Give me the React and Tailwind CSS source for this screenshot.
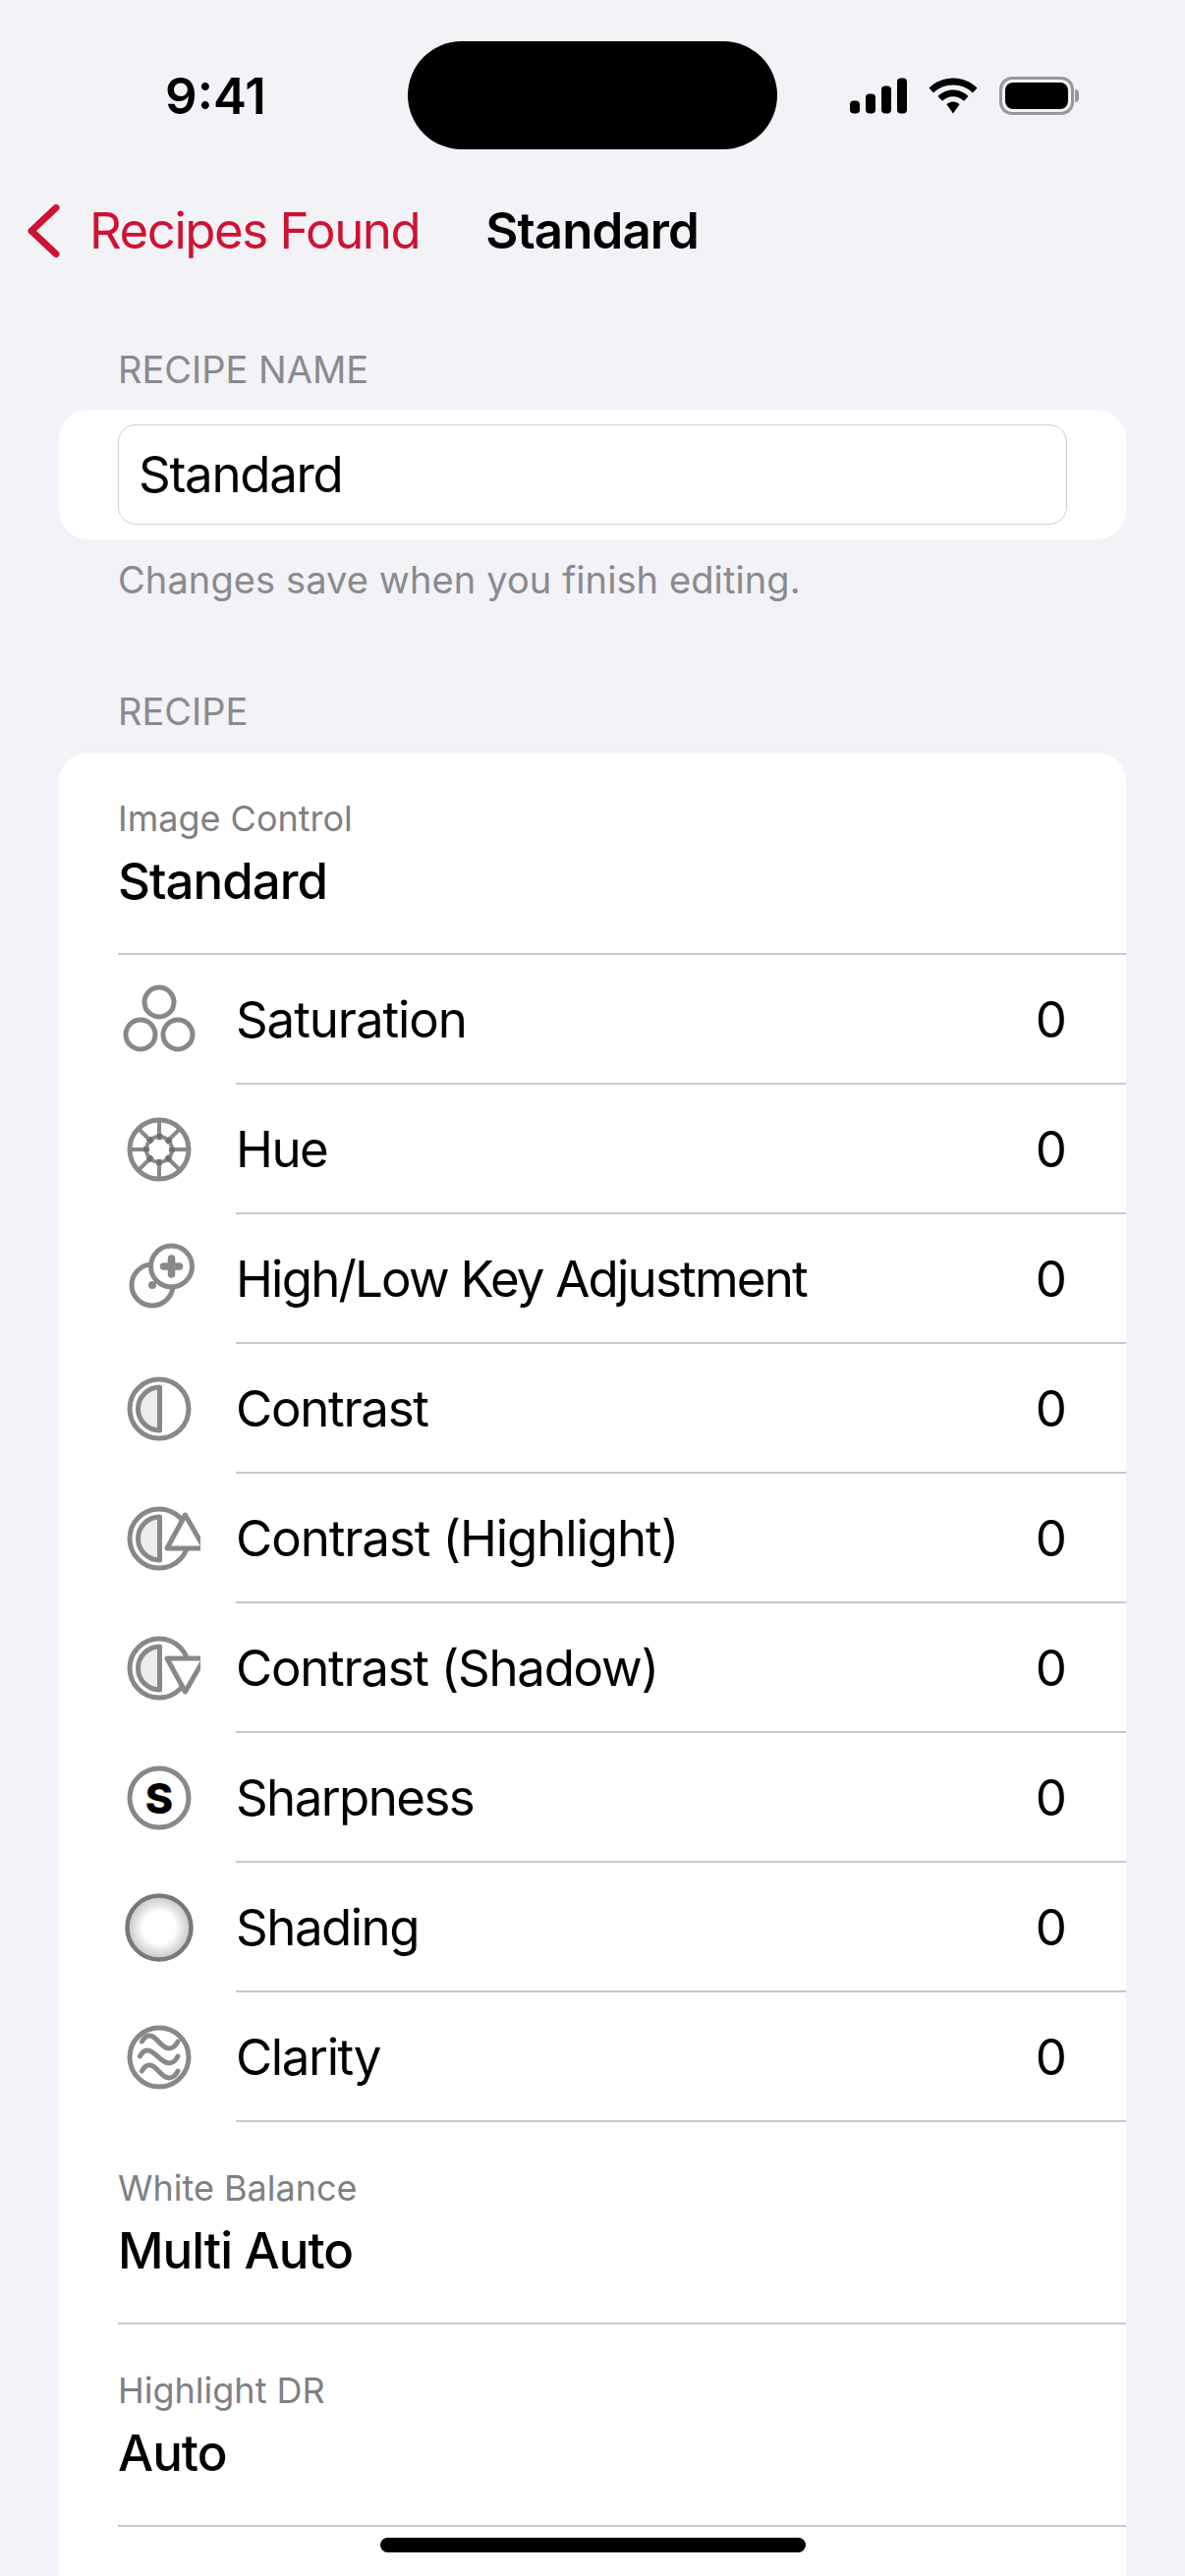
const G = "#88888c";
const font = { fontFamily: "Inter, 'Noto Sans', sans-serif" };

function Half() {
  return <path d="M42.5 20V64A22 22 0 0 1 42.5 20Z" fill="#ececec" stroke={G} strokeWidth="5" strokeLinejoin="round" />;
}
function Svg({ children }) {
  return <svg width="84" height="84" viewBox="0 0 84 84" className="shrink-0">{children}</svg>;
}
const icons = {
  saturation: (
    <Svg>
      <g fill="none" stroke={G} strokeWidth="5">
        <circle cx="42" cy="24" r="15" />
        <circle cx="23" cy="57" r="15" />
        <circle cx="61" cy="57" r="15" />
      </g>
    </Svg>
  ),
  hue: (
    <Svg>
      <circle cx="42" cy="42" r="30" fill="none" stroke={G} strokeWidth="5" />
      <g stroke={G} strokeWidth="4">
        <path d="M42 12V28M42 56V72M12 42H28M56 42H72M21 21L32 32M52 52L63 63M63 21L52 32M32 52L21 63" />
      </g>
      <circle cx="42" cy="42" r="13" fill="none" stroke={G} strokeWidth="4" />
      <circle cx="42" cy="42" r="13" fill="none" stroke="#6e6e72" strokeWidth="6" strokeDasharray="5 5.2" strokeDashoffset="2.5" />
    </Svg>
  ),
  highlow: (
    <Svg>
      <circle cx="35" cy="48" r="21" fill="none" stroke={G} strokeWidth="5" />
      <circle cx="35" cy="48" r="4" fill={G} />
      <circle cx="54.5" cy="29" r="21" fill="#fff" stroke={G} strokeWidth="5" />
      <path d="M54.5 21V37M46.5 29H62.5" stroke={G} strokeWidth="7.500" strokeLinecap="round" />
    </Svg>
  ),
  contrast: (
    <Svg>
      <circle cx="42" cy="42" r="30" fill="none" stroke={G} strokeWidth="5" />
      <Half />
    </Svg>
  ),
  chigh: (
    <Svg>
      <circle cx="42" cy="42" r="30" fill="none" stroke={G} strokeWidth="5" />
      <Half />
      <path d="M68.5 18L50 52H88Z" fill="#fff" stroke={G} strokeWidth="5" strokeLinejoin="round" />
    </Svg>
  ),
  cshadow: (
    <Svg>
      <circle cx="42" cy="42" r="30" fill="none" stroke={G} strokeWidth="5" />
      <Half />
      <path d="M68.5 66L50 32H88Z" fill="#fff" stroke={G} strokeWidth="5" strokeLinejoin="round" />
    </Svg>
  ),
  sharp: (
    <Svg>
      <circle cx="42" cy="42" r="30" fill="none" stroke={G} strokeWidth="5" />
      <text x="42" y="57.500" textAnchor="middle" fontSize="43" fontWeight="800" fill="#000" style={font}>S</text>
    </Svg>
  ),
  shading: (
    <Svg>
      <defs>
        <radialGradient id="sh">
          <stop offset="0" stopColor="#fff" />
          <stop offset="0.5" stopColor="#fff" />
          <stop offset="1" stopColor="#c4c4c6" />
        </radialGradient>
      </defs>
      <circle cx="42" cy="42" r="32.5" fill="url(#sh)" stroke="#78787c" strokeWidth="4.500" />
    </Svg>
  ),
  clarity: (
    <Svg>
      <circle cx="42" cy="42" r="30" fill="none" stroke={G} strokeWidth="5" />
      <g fill="none" stroke={G} strokeWidth="5" strokeLinecap="round">
        <path d="M24.500 26C27 21 30 19.500 33 20C40 21 44 33 52 33C56 33 59 30 61 26" />
        <path d="M22.500 41C25 36 28 34.500 31 35C38 36 44 48 52 48C56 48 59 45 61 41" />
        <path d="M24.500 56C27 51 30 49.500 33 50C40 51 44 63 52 63C56 63 59 60 61 56" />
      </g>
    </Svg>
  ),
};

const rows = [
  ["saturation", "Saturation", "tracking-[-1.1px]"],
  ["hue", "Hue", "tracking-[-1.5px]"],
  ["highlow", "High/Low Key Adjustment", "tracking-[-1.8px]"],
  ["contrast", "Contrast", "tracking-[-1.3px]"],
  ["chigh", "Contrast (Highlight)", "tracking-[-1.1px]"],
  ["cshadow", "Contrast (Shadow)", "tracking-[-1.3px]"],
  ["sharp", "Sharpness", "tracking-[-1.6px]"],
  ["shading", "Shading", "tracking-[-1.5px]"],
  ["clarity", "Clarity", "tracking-[-1.4px]"],
];

function Detail({ label, value }) {
  return (
    <div className="h-[206px] ml-[60px] border-b-2 border-[#c8c8ca] flex flex-col">
      <div className="mt-[45px] h-[44px] leading-[44px] text-[36px] text-[#808084]">{label}</div>
      <div className="mt-[12px] h-[60px] leading-[60px] text-[51px] font-medium tracking-[-1px] text-black">{value}</div>
    </div>
  );
}

export default function App() {
  return (
    <div className="w-[1206px] h-[2622px] overflow-hidden bg-[#f2f2f7] relative" style={font}>
      <div className="h-[152px] pt-[42px] flex items-start">
        <div className="w-[415px] h-[110px] flex items-center justify-center pl-[24px] pt-[2px] text-[51px] font-semibold text-black">9:41</div>
        <div className="w-[376px] h-[110px] rounded-[55px] bg-black" />
        <div className="flex-1 h-[110px] flex items-center pl-[74px] gap-[22px]">
          <svg width="58" height="37" viewBox="0 0 58 36">
            <rect x="0" y="23" width="10" height="13" rx="4" />
            <rect x="16" y="16" width="10" height="20" rx="4" />
            <rect x="32" y="8" width="10" height="28" rx="4" />
            <rect x="48" y="0" width="10" height="36" rx="4" />
          </svg>
          <svg width="50" height="37" viewBox="0 0 50 36">
            <path d="M25 0C15.500 0 7 3.800 0.500 10L5 15C10.200 9.900 17.300 7 25 7S39.800 9.900 45 15L49.500 10C43 3.800 34.500 0 25 0Z" />
            <path d="M25 12C19 12 13.500 14.400 9.500 18.500L14 23.300C16.900 20.400 20.800 18.700 25 18.700S33.100 20.400 36 23.300L40.500 18.500C36.500 14.400 31 12 25 12Z" />
            <path d="M25 24C22.500 24 20.200 25 18.500 26.700L25 36L31.500 26.700C29.800 25 27.500 24 25 24Z" />
          </svg>
          <div className="flex items-center">
            <div className="w-[76px] h-[39px] rounded-[13px] border-[3px] border-[#98989b] p-[3px]">
              <div className="w-full h-full rounded-[8px] bg-black" />
            </div>
            <div className="w-[4px] h-[13px] ml-[1px] rounded-r-[4px] bg-[#98989b]" />
          </div>
        </div>
      </div>

      <div className="mt-[17px] h-[132px] flex items-center relative">
        <svg width="40" height="60" viewBox="0 0 40 60" className="ml-[24px] shrink-0">
          <path d="M33 6.500L8 30L33 53.500" fill="none" stroke="#cf1233" strokeWidth="7" strokeLinecap="round" strokeLinejoin="round" />
        </svg>
        <span className="ml-[27px] text-[51px] text-[#cf1233] tracking-[-1.5px]">Recipes Found</span>
        <span className="ml-[67px] text-[51px] font-semibold text-black tracking-[-0.9px]">Standard</span>
      </div>

      <div className="mx-[60px]">
        <div className="pl-[60px] h-[40px] mt-[55px] leading-[40px] text-[38px] text-[#8a8a8e]">RECIPE NAME</div>
        <div className="mt-[21px] h-[132px] bg-white rounded-[30px] px-[60px] flex items-center">
          <div className="w-full h-[102px] rounded-[18px] border-[1.5px] border-[#cfcfd1] flex items-center px-[20px] text-[51px] tracking-[-1.3px] text-black">
            Standard
          </div>
        </div>
        <div className="pl-[60px] mt-[21px] h-[40px] leading-[40px] text-[38px] tracking-[0.1px] text-[#8a8a8e]">Changes save when you finish editing.</div>

        <div className="pl-[60px] mt-[94px] h-[40px] leading-[40px] text-[38px] text-[#8a8a8e]">RECIPE</div>
        <div className="mt-[22px] bg-white rounded-[30px] h-[1900px]">
          <Detail label="Image Control" value="Standard" />
          {rows.map(([k, name, tr]) => (
            <div key={k} className="h-[132px] pl-[60px] flex items-center">
              {icons[k]}
              <div className="h-full ml-[36px] flex-1 border-b-2 border-[#c8c8ca] flex items-center justify-between pt-[3px] pr-[60px] text-[51px] text-black">
                <span className={tr}>{name}</span>
                <span>0</span>
              </div>
            </div>
          ))}
          <Detail label="White Balance" value="Multi Auto" />
          <Detail label="Highlight DR" value="Auto" />
        </div>
      </div>

      <div className="absolute left-[387px] bottom-[24px] w-[433px] h-[15px] rounded-[8px] bg-black" />
    </div>
  );
}
